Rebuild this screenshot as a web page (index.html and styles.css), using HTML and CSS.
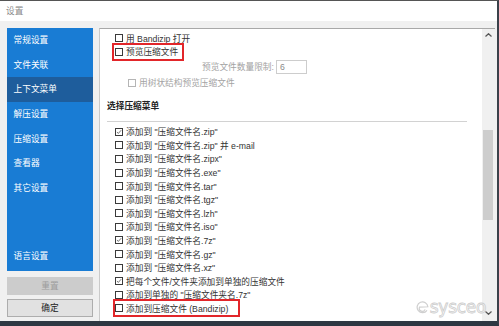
FILE: index.html
```html
<!DOCTYPE html>
<html lang="zh-CN">
<head>
<meta charset="utf-8">
<title>设置</title>
<link rel="stylesheet" href="styles.css">
</head>
<body>
<div class="window">
  <div class="titlebar">设置</div>
  <div class="main">
    <div class="side">
      <nav class="nav">
        <div class="nav-item">常规设置</div>
        <div class="nav-item">文件关联</div>
        <div class="nav-item active">上下文菜单</div>
        <div class="nav-item">解压设置</div>
        <div class="nav-item">压缩设置</div>
        <div class="nav-item">查看器</div>
        <div class="nav-item">其它设置</div>
        <div class="nav-spacer"></div>
        <div class="nav-item">语言设置</div>
      </nav>
      <div class="btn btn-disabled">重置</div>
      <div class="btn">确定</div>
    </div>
    <div class="panel">
      <div class="content">
        <div class="row first"><span class="cb"></span><span>用 Bandizip 打开</span></div>
        <div class="row hl hl-a"><span class="cb"></span><span>预览压缩文件</span></div>
        <div class="row-limit"><span class="muted">预览文件数量限制:</span><span class="num">6</span></div>
        <div class="row row-tree"><span class="cb cb-dis"></span><span class="muted">用树状结构预览压缩文件</span></div>
        <div class="section-title">选择压缩菜单</div>
        <div class="divider"></div>
        <div class="list">
          <div class="item"><span class="cb"><svg viewBox="0 0 8 8"><path d="M1.2 3.9 L3.1 5.9 L6.9 1.6"/></svg></span><span>添加到 "压缩文件名.zip"</span></div>
          <div class="item"><span class="cb"></span><span>添加到 "压缩文件名.zip" 并 e-mail</span></div>
          <div class="item"><span class="cb"></span><span>添加到 "压缩文件名.zipx"</span></div>
          <div class="item"><span class="cb"></span><span>添加到 "压缩文件名.exe"</span></div>
          <div class="item"><span class="cb"></span><span>添加到 "压缩文件名.tar"</span></div>
          <div class="item"><span class="cb"></span><span>添加到 "压缩文件名.tgz"</span></div>
          <div class="item"><span class="cb"></span><span>添加到 "压缩文件名.lzh"</span></div>
          <div class="item"><span class="cb"></span><span>添加到 "压缩文件名.iso"</span></div>
          <div class="item"><span class="cb"><svg viewBox="0 0 8 8"><path d="M1.2 3.9 L3.1 5.9 L6.9 1.6"/></svg></span><span>添加到 "压缩文件名.7z"</span></div>
          <div class="item"><span class="cb"></span><span>添加到 "压缩文件名.gz"</span></div>
          <div class="item"><span class="cb"></span><span>添加到 "压缩文件名.xz"</span></div>
          <div class="item"><span class="cb"><svg viewBox="0 0 8 8"><path d="M1.2 3.9 L3.1 5.9 L6.9 1.6"/></svg></span><span>把每个文件/文件夹添加到单独的压缩文件</span></div>
          <div class="item"><span class="cb"></span><span>添加到单独的 "压缩文件夹名.7z"</span></div>
          <div class="item hl hl-b"><span class="cb"></span><span>添加到压缩文件 (Bandizip)</span></div>
        </div>
      </div>
      <div class="scrollbar">
        <div class="sb-arrow"><svg viewBox="0 0 7 4"><path d="M0.5 3.5 L3.5 0.7 L6.5 3.5"/></svg></div>
        <div class="sb-thumb"></div>
        <div class="sb-fill"></div>
        <div class="sb-arrow sb-down"><svg viewBox="0 0 7 4"><path d="M0.5 0.5 L3.5 3.3 L6.5 0.5"/></svg></div>
      </div>
      <div class="watermark">
        <svg class="wm-logo" viewBox="0 0 14 14"><path d="M11.8 10 A5.8 5.8 0 1 1 12.8 6.2 L3.8 6.6 A3.2 3.2 0 0 0 9.8 9"/></svg>
        <span class="wm-text">sysceo</span>
      </div>
    </div>
  </div>
</div>
</body>
</html>
```
FILE: styles.css
```css
* { box-sizing: border-box; }
html, body { margin: 0; padding: 0; }
body {
  width: 499px;
  height: 326px;
  overflow: hidden;
  font-family: "Liberation Sans", "Noto Sans CJK SC", sans-serif;
  font-size: 8.7px;
  color: #333;
  background: #f0f0f0;
}
.window {
  width: 499px;
  height: 326px;
  border-top: 1px solid #555;
  border-right: 2px solid #3a414a;
  border-bottom: 5px solid #2e3742;
  background: #f0f0f0;
  display: flex;
  flex-direction: column;
}
.titlebar {
  height: 20px;
  flex: none;
  background: #fff;
  color: #8a8a8a;
  padding-left: 6px;
  line-height: 20px;
  font-size: 8.7px;
}
.main {
  flex: 1;
  display: flex;
  padding: 7px 2px 0 7px;
  gap: 6px;
}
.side {
  width: 86px;
  display: flex;
  flex-direction: column;
  padding-bottom: 4px;
}
.nav {
  flex: 1;
  background: #197cd4;
  display: flex;
  flex-direction: column;
  padding-bottom: 2px;
}
.nav-item {
  height: 24.7px;
  line-height: 24.7px;
  padding-left: 6.5px;
  color: #fff;
}
.nav-item.active { background: #1e5d9c; }
.nav-spacer { flex: 1; }
.btn {
  height: 18px;
  line-height: 16px;
  margin-top: 4px;
  text-align: center;
  background: #e1e1e1;
  border: 1px solid #adadad;
  color: #222;
}
.btn-disabled {
  margin-top: 6px;
  background: #cccccc;
  border-color: #cccccc;
  color: #9c9c9c;
}
.panel {
  flex: 1;
  position: relative;
  display: flex;
  background: #fff;
  border-top: 1px solid #a8a8a8;
  border-left: 1px solid #cacaca;
}
.content {
  flex: 1;
  padding: 2.3px 0 0 15px;
}
.row, .item {
  display: flex;
  align-items: center;
  gap: 3px;
  height: 13.7px;
  white-space: nowrap;
}
.item { height: 13.6px; }
.cb {
  width: 8px;
  height: 8px;
  flex: none;
  border: 1px solid #3a3a3a;
  background: #fff;
  display: flex;
}
.cb svg { width: 100%; height: 100%; fill: none; stroke: #333; stroke-width: 0.9; }
.cb-dis { border-color: #b5b5b5; }
.muted { color: #a3a3a3; }
.row-limit {
  display: flex;
  align-items: center;
  gap: 2px;
  height: 15px;
  margin-top: 0.8px;
  padding-left: 87px;
}
.num {
  width: 31px;
  height: 14px;
  border: 1px solid #cdcdcd;
  color: #8a8a8a;
  padding-left: 3px;
  line-height: 12px;
}
.row-tree { margin-top: 1.5px; padding-left: 13px; }
.section-title {
  margin: 10px 0 0 -8px;
  height: 13.7px;
  line-height: 13.7px;
  font-weight: bold;
  color: #222;
}
.divider {
  margin: 7.3px 0 0 -8px;
  width: 360px;
  height: 1px;
  background: #d2d2d2;
}
.list { margin-top: 3.3px; }
.hl { position: relative; }
.hl::after {
  content: "";
  position: absolute;
  border: 2px solid #e2262a;
}
.hl-a::after { left: -3px; top: -2px; bottom: -2px; width: 68px; }
.hl-b::after { left: -2px; top: -3px; bottom: -1.5px; width: 123px; }
.scrollbar {
  width: 13px;
  flex: none;
  background: #f0f0f0;
  display: flex;
  flex-direction: column;
}
.sb-arrow {
  height: 12px;
  display: flex;
  align-items: center;
  justify-content: center;
}
.sb-arrow svg { width: 7px; height: 4px; fill: none; stroke: #555; stroke-width: 1.2; }
.sb-down { margin-bottom: 2px; }
.sb-thumb {
  margin: 89px 0 0 1px;
  width: 10px;
  height: 90px;
  background: #cdcdcd;
}
.sb-fill { flex: 1; }
.watermark {
  position: absolute;
  right: 9px;
  bottom: 5px;
  display: flex;
  align-items: center;
  gap: 1px;
}
.wm-logo { width: 13px; height: 13px; fill: none; stroke: #cfcfcf; stroke-width: 1.3; }
.wm-text {
  font-family: "DejaVu Sans", sans-serif;
  font-size: 17px;
  line-height: 18px;
  color: rgba(255, 255, 255, 0.7);
  -webkit-text-stroke: 0.8px #cccccc;
  letter-spacing: -0.3px;
}
```
